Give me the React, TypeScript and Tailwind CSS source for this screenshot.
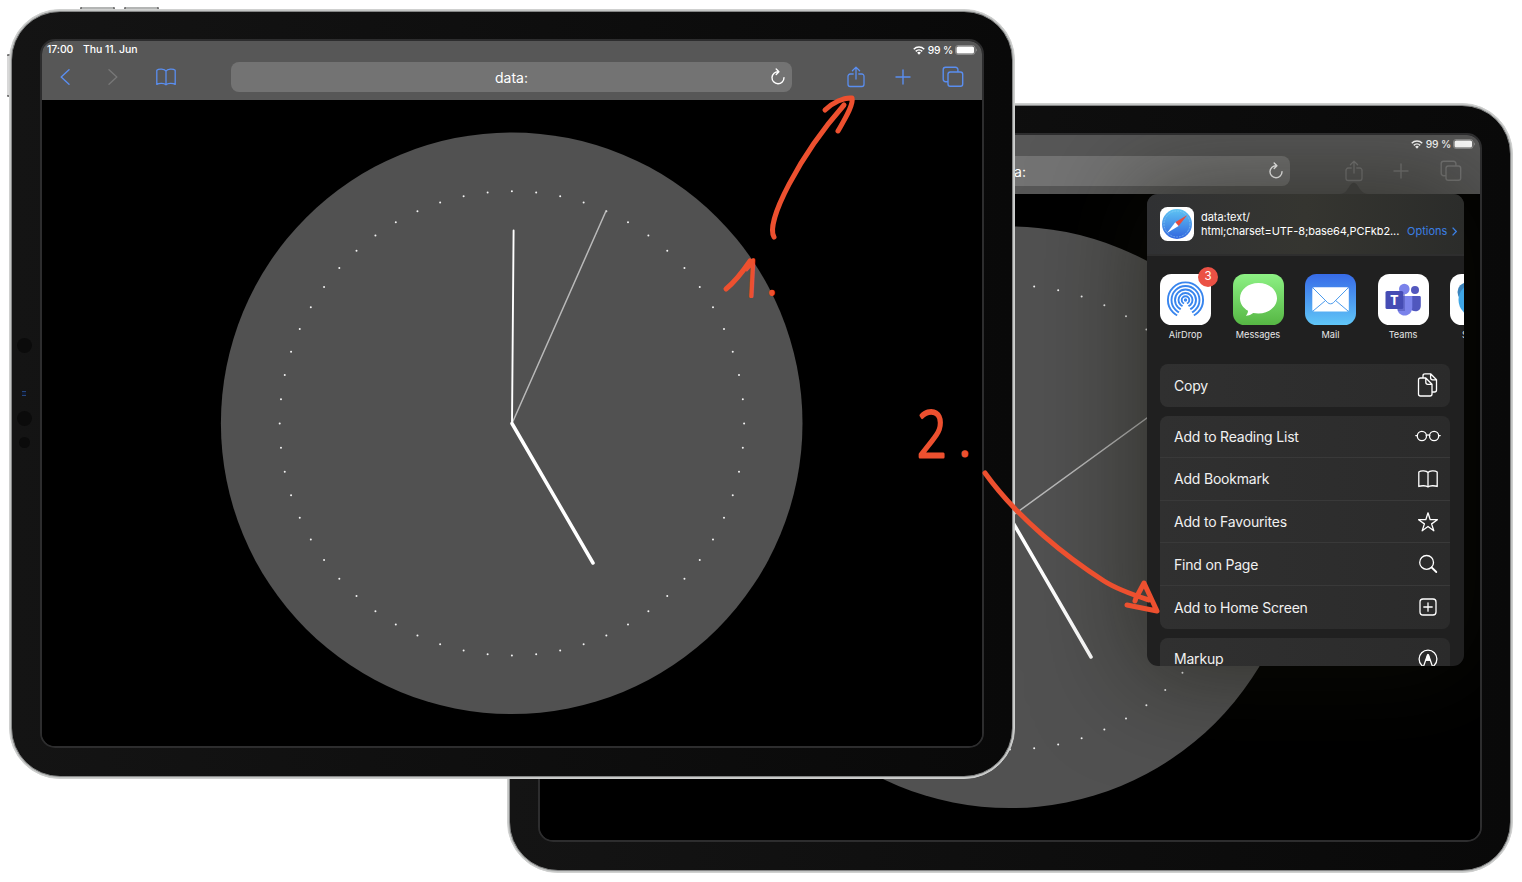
import React from "react";

type IconProps = { className?: string };

const BookIcon = ({ className }: IconProps) => (
  <svg viewBox="0 0 20 18" className={className} fill="none" stroke="currentColor" strokeWidth="1.3" strokeLinejoin="round" strokeLinecap="round">
    <path d="M10 3.2C8.6.8 3 .3.8 2.2V16.4c2.6-1.5 7.4-1.3 9.2.4 1.8-1.7 6.600-1.900 9.200-.4V2.200C17 .3 11.400.8 10 3.200ZM10 3.200V16.800" />
  </svg>
);
const ShareIcon = () => (
  <svg viewBox="0 0 18 22" className="h-[22px] w-[18px]" fill="none" stroke="currentColor" strokeWidth="1.300" strokeLinecap="round" strokeLinejoin="round">
    <path d="M6.200 8H3.200A2.200 2.200 0 0 0 1 10.200v8.100a2.200 2.200 0 0 0 2.200 2.200h11.600a2.200 2.200 0 0 0 2.200-2.200v-8.100A2.200 2.200 0 0 0 14.800 8h-3M9 13V1.300M5.400 4.700 9 1.100l3.600 3.600" />
  </svg>
);
const TabsIcon = () => (
  <svg viewBox="0 0 22 22" className="h-[22px] w-[22px]" fill="none" stroke="currentColor" strokeWidth="1.400">
    <rect x="6" y="6" width="14.700" height="14.300" rx="2.200" />
    <path d="M6 15.700H3.600A2.400 2.400 0 0 1 1.200 13.300V3.600A2.400 2.400 0 0 1 3.600 1.200h9.900a2.400 2.400 0 0 1 2.400 2.400V6" />
  </svg>
);
const ReloadIcon = () => (
  <svg viewBox="0 0 16 18" className="h-[18px] w-[16px]" fill="none" stroke="currentColor" strokeWidth="1.400" strokeLinecap="round" strokeLinejoin="round">
    <path d="M8.500 3.700A6 6 0 1 0 14 9.600M6.200 1.100l2.700 2.700-2.700 2.700" />
  </svg>
);
const WifiIcon = () => (
  <svg viewBox="0 0 24 18" className="h-[9px] w-[12px]" fill="none" stroke="white" strokeWidth="3">
    <path d="M1.500 6.500a15 15 0 0 1 21 0M5.500 10.700a9.300 9.300 0 0 1 13 0" />
    <path d="M8.300 13.400a5.300 5.300 0 0 1 7.400 0L12 17.500Z" fill="white" stroke="none" />
  </svg>
);
const BatteryIcon = () => (
  <svg viewBox="0 0 23 10" className="h-[10px] w-[23px]">
    <rect x=".5" y=".5" width="19.500" height="9" rx="2.500" fill="none" stroke="#8a8a8a" />
    <rect x="1.500" y="1.500" width="17.500" height="7" rx="1.600" fill="white" />
    <path d="M21 3.500c1.300.5 1.300 2.500 0 3Z" fill="#8a8a8a" />
  </svg>
);

function Toolbar({ muted = false }: { muted?: boolean }) {
  return (
    <header className="h-[59px] bg-[#575757] text-white">
      <div className="flex h-[18px] items-center pl-[5px] pr-[4px] pt-[1px] text-[10.500px] font-medium leading-none">
        <span className="w-[36px] tracking-[-0.100px]">17:00</span>
        <span className="whitespace-nowrap tracking-[-0.100px]">Thu 11. Jun</span>
        <span className="ml-auto flex items-center">
          <WifiIcon />
          <span className="ml-[3px] mr-[2px] whitespace-nowrap text-[10.300px] tracking-[-0.150px]">99 %</span>
          <BatteryIcon />
        </span>
      </div>
      <div className={"flex h-[36px] items-center " + (muted ? "text-[#777777]" : "text-[#5a8ef0]")}>
        <svg viewBox="0 0 10 16" className="ml-[18px] h-[16px] w-[10px]" fill="none" stroke="currentColor" strokeWidth="1.400" strokeLinecap="round" strokeLinejoin="round">
          <path d="M9 .8 1.200 8 9 15.200" />
        </svg>
        <svg viewBox="0 0 10 16" className="ml-[38px] h-[16px] w-[10px] text-[#777777]" fill="none" stroke="currentColor" strokeWidth="1.400" strokeLinecap="round" strokeLinejoin="round">
          <path d="m1 .8 7.800 7.200L1 15.200" />
        </svg>
        <BookIcon className="ml-[38px] h-[18px] w-[20px]" />
        <div className="ml-[55px] flex h-[30px] w-[561px] items-center rounded-[8px] bg-[#737373] text-[14px] text-white">
          <span className="flex-1 pl-[22px] text-center">data:</span>
          <span className="mr-[6px] flex w-[16px]"><ReloadIcon /></span>
        </div>
        <span className="ml-[55px]"><ShareIcon /></span>
        <svg viewBox="0 0 16 16" className="ml-[30px] h-[16px] w-[16px]" stroke="currentColor" strokeWidth="1.400" strokeLinecap="round">
          <path d="M8 1v14M1 8h14" />
        </svg>
        <span className="ml-[31px]"><TabsIcon /></span>
      </div>
    </header>
  );
}

const ticks = Array.from({ length: 60 }, (_, i) => {
  const a = (i * Math.PI) / 30;
  return { x: 469.900 + 232.200 * Math.sin(a), y: 323.400 - 232.200 * Math.cos(a) };
});

function Clock({ secondX, secondY }: { secondX: number; secondY: number }) {
  return (
    <svg viewBox="0 0 941 646" className="block h-[646px] w-[941px] bg-black">
      <circle cx="469.700" cy="323.300" r="290.800" fill="#515151" />
      {ticks.map((t, i) => (
        <circle key={i} cx={t.x} cy={t.y} r="1" fill="#f4f4f4" />
      ))}
      <g strokeLinecap="round">
        <line x1="470" y1="323.500" x2={secondX} y2={secondY} stroke="#b9b9b9" strokeWidth="1.500" />
        <line x1="470" y1="323.500" x2="471.600" y2="130.500" stroke="white" strokeWidth="1.900" />
        <line x1="470" y1="323.500" x2="551" y2="463" stroke="white" strokeWidth="3.500" />
      </g>
    </svg>
  );
}

function Tablet({ children }: { children: React.ReactNode }) {
  return (
    <div className="h-[770px] w-[1006px] rounded-[51px] border border-[#cfd0cf] bg-[#c3c5c4] p-[1px]">
      <div className="h-full w-full rounded-[49px] border border-[#858686] bg-linear-to-r from-[#141414] to-[#090909] pl-[28px] pt-[27px]">
        <div className="h-[709px] w-[944px] overflow-hidden rounded-[15px] border-2 border-[#2d2d2e] bg-black">
          {children}
        </div>
      </div>
    </div>
  );
}

const SafariIcon = () => (
  <svg viewBox="0 0 34 34" className="h-[34px] w-[34px] shrink-0">
    <defs>
      <linearGradient id="safari" x2="0" y2="1"><stop stopColor="#5fc5f3" /><stop offset="1" stopColor="#3265df" /></linearGradient>
    </defs>
    <rect width="34" height="34" rx="7.500" fill="white" />
    <circle cx="17" cy="17" r="15" fill="url(#safari)" />
    <circle cx="17" cy="17" r="13" fill="none" stroke="#9ad3f8" strokeWidth="1" strokeDasharray=".6 1" />
    <path d="m27.300 8-8.700 11-3.300-3.700Z" fill="#e94c3d" />
    <path d="m7 26 8.300-10.700 3.300 3.700Z" fill="white" />
  </svg>
);
const AirDropIcon = () => (
  <svg viewBox="0 0 51 51" className="h-[51px] w-[51px]">
    <rect width="51" height="51" rx="11.500" fill="white" />
    <g fill="none" stroke="#3885ee" strokeWidth="1.900">
      <circle cx="25.500" cy="26" r="17.600" /><circle cx="25.500" cy="26" r="14" /><circle cx="25.500" cy="26" r="10.500" />
      <circle cx="25.500" cy="26" r="7" /><circle cx="25.500" cy="26" r="3.800" />
    </g>
    <path d="M25.500 27 36.500 46H14.500Z" fill="white" />
    <circle cx="25.500" cy="26" r="1.700" fill="#3885ee" />
  </svg>
);
const MessagesIcon = () => (
  <svg viewBox="0 0 51 51" className="h-[51px] w-[51px]">
    <defs><linearGradient id="msg" x2="0" y2="1"><stop stopColor="#8df184" /><stop offset="1" stopColor="#56b744" /></linearGradient></defs>
    <rect width="51" height="51" rx="11.500" fill="url(#msg)" />
    <path d="M25.500 9C15 9 7 15.700 7 24.300c0 5.300 3 9.700 8 12.500 0 2-1 3.600-2.200 5 3 0 5.500-1.200 7.400-2.800 12.600 2.500 23.800-4.700 23.800-14.700C44 15.700 36 9 25.500 9Z" fill="white" />
  </svg>
);
const MailIcon = () => (
  <svg viewBox="0 0 51 51" className="h-[51px] w-[51px]">
    <defs><linearGradient id="mail" x2="0" y2="1"><stop stopColor="#376be8" /><stop offset="1" stopColor="#60c6f7" /></linearGradient></defs>
    <rect width="51" height="51" rx="11.500" fill="url(#mail)" />
    <rect x="7.300" y="13.300" width="36.500" height="24.300" rx="1.800" fill="white" />
    <path d="m8 14 14.700 14.700c1.700 1.500 4 1.500 5.700 0L43 14M8 37l12.500-10.500M43 37 30.600 26.500" fill="none" stroke="#4b9bed" strokeWidth="1" />
  </svg>
);
const TeamsIcon = () => (
  <svg viewBox="0 0 51 51" className="h-[51px] w-[51px]">
    <rect width="51" height="51" rx="11.500" fill="white" />
    <circle cx="37" cy="16" r="4" fill="#5358be" />
    <path d="M32 22h9.500c.8 0 1.300.6 1.300 1.400v8.300c0 7-8.800 7-10.800 2.300Z" fill="#5057be" />
    <circle cx="26.300" cy="15" r="5.300" fill="#7b83eb" />
    <path d="M19 22h15.300v11c0 11.400-15.300 11.400-15.300 0Z" fill="#7b83eb" />
    <path d="M20 20h7v17h-7Z" fill="#4b51ad" opacity=".5" />
    <rect x="7.500" y="17" width="17.800" height="18" rx="1.600" fill="#454cb4" />
    <text x="16.400" y="30.800" textAnchor="middle" fontFamily="Open Sans, sans-serif" fontSize="14" fontWeight="700" fill="white">T</text>
  </svg>
);
const SkypeIcon = () => (
  <svg viewBox="0 0 51 51" className="h-[51px] w-[51px]">
    <rect width="51" height="51" rx="11.500" fill="white" />
    <circle cx="17" cy="18" r="9.500" fill="#3c83bb" /><circle cx="25.500" cy="26" r="17" fill="#3fa6e5" />
  </svg>
);

const apps = [
  { name: "AirDrop", icon: <AirDropIcon />, badge: "3" },
  { name: "Messages", icon: <MessagesIcon /> },
  { name: "Mail", icon: <MailIcon /> },
  { name: "Teams", icon: <TeamsIcon /> },
  { name: "Skype", icon: <SkypeIcon /> },
];

const Line = ({ children }: { children: React.ReactNode }) => (
  <svg viewBox="0 0 26 26" className="h-[26px] w-[26px]" fill="none" stroke="white" strokeWidth="1.300" strokeLinejoin="round" strokeLinecap="round">{children}</svg>
);

const actions = [
  { label: "Add to Reading List", icon: <Line><circle cx="6.900" cy="13" r="4.600" /><circle cx="19.100" cy="13" r="4.600" /><path d="M11.300 12.400q1.700-1 3.400 0M2.300 12.600H.8M23.700 12.600h1.500" /></Line> },
  { label: "Add Bookmark", icon: <Line><path d="M13 6.500C11.500 4.700 6 4.400 3.800 6v14.500c2.500-1.100 7.500-1 9.200.4 1.700-1.400 6.700-1.500 9.200-.4V6C20 4.400 14.500 4.700 13 6.500ZM13 6.500v14.400" /></Line> },
  { label: "Add to Favourites", icon: <Line><path d="m13 3.800 2.200 6.900h7.200l-5.800 4.200 2.200 6.900-5.800-4.300-5.800 4.300 2.200-6.900-5.800-4.200h7.200Z" /></Line> },
  { label: "Find on Page", icon: <Line><circle cx="11.600" cy="11.400" r="6.900" /><path d="m16.700 16.500 4.600 4.500" strokeWidth="1.800" /></Line> },
  { label: "Add to Home Screen", icon: <Line><rect x="5" y="5" width="16" height="16" rx="3" /><path d="M13 8.800v8.400M8.800 13h8.400" /></Line> },
];

function ActionRow({ label, icon }: { label: string; icon: React.ReactNode }) {
  return (
    <div className="flex h-[42.600px] items-center justify-between border-b border-[#393939] pl-[14px] pr-[9px] text-[14px] tracking-[-0.200px] text-[#f1f1f1] last:border-b-0">
      <span>{label}</span>
      {icon}
    </div>
  );
}

function SharePopover() {
  return (
    <div className="absolute left-[607px] top-[59px] h-[472px] w-[316.500px] rounded-[11px] shadow-[0_0_100px_12px_rgba(20,20,10,0.5)]">
      <svg viewBox="0 0 28 12" className="absolute left-[193px] top-[-12px] h-[12px] w-[28px]">
        <path d="M0 12c5 0 7-4 10-8.500 2.500-3.700 5-3.700 7.500 0C20.500 8 23 12 28 12Z" fill="#393936" />
      </svg>
      <div className="h-full overflow-hidden rounded-[11px] bg-[#202020] text-white">
        <div className="flex h-[62px] items-center border-b-2 border-[#2e2e2e] bg-linear-to-r from-[#303133] via-[#353530] to-[#2b2c2a] pl-[13px]">
          <SafariIcon />
          <div className="ml-[7px] w-[206px] text-[11px] leading-[14px]">
            <p className="tracking-[-0.050px]">data:text/</p>
            <p className="whitespace-nowrap tracking-[-0.090px]">html;charset=UTF-8;base64,PCFkb2...</p>
          </div>
          <span className="mt-[14px] flex items-center gap-[5px] text-[11px] leading-[14px] text-[#3b7fe3]">
            Options
            <svg viewBox="0 0 5 9" className="h-[9px] w-[5px]" fill="none" stroke="currentColor" strokeWidth="1.300"><path d="m.6.6 3.700 3.900L.6 8.400" /></svg>
          </span>
        </div>
        <div className="flex h-[108px] gap-[21.500px] pl-[13px] pt-[18px]">
          {apps.map((app) => (
            <div key={app.name} className="relative flex w-[51px] shrink-0 flex-col items-center">
              {app.icon}
              {app.badge && (
                <span className="absolute right-[-7px] top-[-7px] flex h-[20px] w-[20px] items-center justify-center rounded-full bg-[#eb5145] text-[11.500px]">{app.badge}</span>
              )}
              <span className="mt-[4px] text-[9.200px] leading-[12px] text-[#e8e8e8]">{app.name}</span>
            </div>
          ))}
        </div>
        <div className="flex flex-col gap-[9px] pl-[13px]">
          <div className="w-[290px] rounded-[8px] bg-linear-to-r from-[#303030] to-[#2b2b2b]">
            <ActionRow label="Copy" icon={<Line><path d="M8 5V3.800q0-2 2-2h5.600l5.900 6V18q0 2-2 2H18M15.600 1.800v4q0 2 2 2h3.900M5.500 6h5.300l6.200 6.300V22q0 2-2 2H5.500q-2 0-2-2V8q0-2 2-2ZM10.800 6v4.300q0 2 2 2H17" /></Line>} />
          </div>
          <div className="w-[290px] rounded-[8px] bg-linear-to-r from-[#303030] to-[#2b2b2b]">
            {actions.map((a) => <ActionRow key={a.label} {...a} />)}
          </div>
          <div className="w-[290px] rounded-t-[8px] bg-linear-to-r from-[#303030] to-[#2b2b2b]">
            <ActionRow label="Markup" icon={<Line><circle cx="13" cy="13" r="8.900" /><path d="m8.500 20.500 4-11.500h1l4 11.500M11.300 14h3.400" /><path d="m11.300 14 1.700-5.500 1.700 5.500Z" fill="white" /></Line>} />
          </div>
        </div>
      </div>
    </div>
  );
}

function Annotations() {
  return (
    <svg viewBox="0 0 1522 882" className="pointer-events-none absolute left-0 top-0 h-[882px] w-[1522px]" fill="none" stroke="#ed502f" strokeWidth="5" strokeLinecap="round" strokeLinejoin="round">
      <path d="M774 237C765 222 800 155 844 105M825 110C832 103 844 97 852 98C854 105 843 122 838 131" />
      <path d="M985 473C1018 519 1068 558 1104 581Q1118 590 1149 600M1135 601l1-3 8-15 13 28-30-6" />
      <path d="M726 289Q737 280 750 261" />
      <g fontFamily="Open Sans, sans-serif" fontWeight="300" fill="#ed502f" strokeWidth="3">
        <g transform="translate(741 296) skewX(-3) scale(.65 1)"><text fontSize="50" strokeWidth="4">1</text></g>
        <text x="766" y="294.500" fontSize="48" strokeWidth="2">.</text>
        <g transform="translate(917 457) scale(.82 1)"><text fontSize="64">2</text></g>
        <text x="959" y="456" fontSize="48">.</text>
      </g>
    </svg>
  );
}

export default function App() {
  return (
    <main className="relative h-[882px] w-[1522px] overflow-hidden bg-white font-['Inter',sans-serif]">
      <div className="absolute left-[507px] top-[103px]">
        <Tablet>
          <div className="relative">
            <Toolbar muted />
            <Clock secondX={656.500} secondY={188} />
            <SharePopover />
          </div>
        </Tablet>
      </div>
      <div className="absolute left-[80px] top-[7px] flex gap-[9px]">
        <span className="h-[3px] w-[35px] rounded-t-[1px] border-x-2 border-[#777777] bg-[#b3b5b4]" />
        <span className="h-[3px] w-[35px] rounded-t-[1px] border-x-2 border-[#777777] bg-[#b3b5b4]" />
      </div>
      <div className="absolute left-[7px] top-[54px] h-[43px] w-[3px] rounded-l-[1px] border-y-2 border-[#777777] bg-[#d8d8d8]" />
      <div className="absolute left-[9px] top-[9px]">
        <Tablet>
          <Toolbar />
          <Clock secondX={564} secondY={111} />
        </Tablet>
      </div>
      <div className="absolute left-[16px] top-[338px] flex w-[16px] flex-col items-center">
        <span className="h-[15px] w-[15px] rounded-full bg-[#0b0b0b]" />
        <span className="mt-[38px] h-[5px] w-[4px] border-y border-[#24457f] bg-[#101a30]" />
        <span className="mt-[15px] h-[15px] w-[15px] rounded-full bg-[#0b0b0b]" />
        <span className="mt-[11px] h-[11px] w-[11px] rounded-full bg-[#0b0b0b]" />
      </div>
      <Annotations />
    </main>
  );
}
